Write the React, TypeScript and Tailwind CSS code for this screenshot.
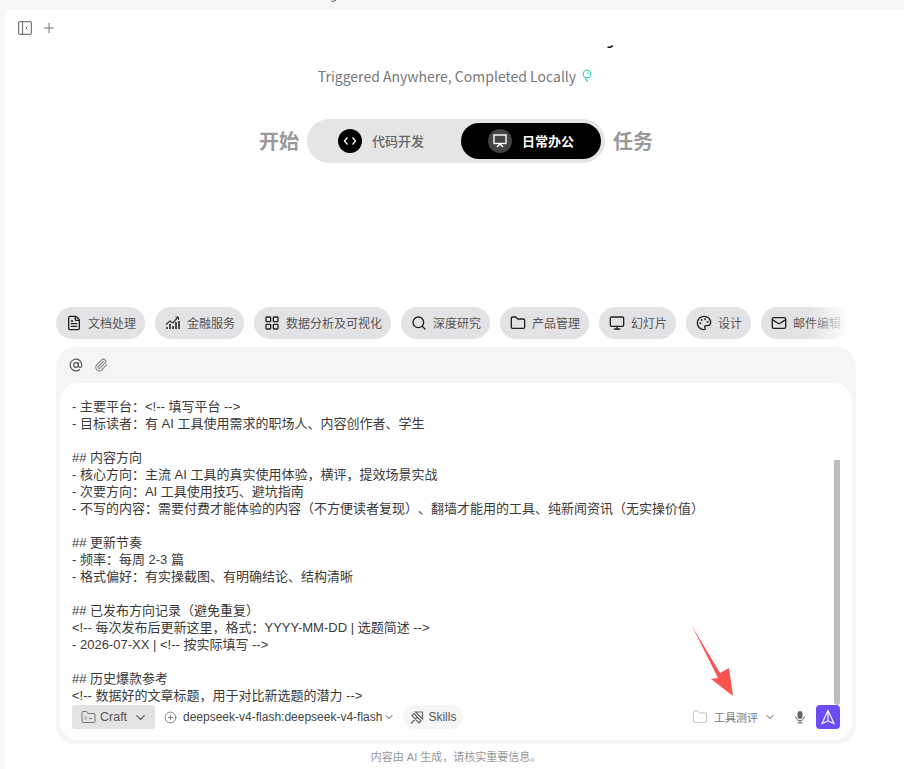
import React from "react";
import { FileText, LayoutGrid, Search, Folder, Monitor, Palette, Mail, AtSign, Paperclip, ChevronDown, Plus, CirclePlus } from "lucide-react";

const sans = "font-['Liberation_Sans','Noto_Sans_CJK_SC',sans-serif]";
const cjk = "font-['Noto_Sans_CJK_SC','Noto_Sans',sans-serif]";

const Chart = () => (
  <svg width="16" height="16" viewBox="0 0 16 16" fill="none" stroke="#333" strokeWidth="1.2">
    <path d="M1 9.5l4-3.5 3 2 5-6" />
    <path d="M10.5 2h3v3" strokeWidth="1" />
    <path d="M2 14v-2M5 14V9M8 14v-3M11 14V7M14 14V6" strokeWidth="1.7" />
  </svg>
);

const chips: [React.ReactNode, string, string][] = [
  [<FileText size={16} color="#222" />, "文档处理", "w-[89px]"],
  [<Chart />, "金融服务", "w-[89px]"],
  [<LayoutGrid size={16} color="#222" />, "数据分析及可视化", "w-[137px]"],
  [<Search size={16} color="#222" />, "深度研究", "w-[89px]"],
  [<Folder size={16} color="#222" />, "产品管理", "w-[89px]"],
  [<Monitor size={16} color="#222" />, "幻灯片", "w-[77px]"],
  [<Palette size={16} color="#222" />, "设计", "w-[65px]"],
  [<Mail size={16} color="#222" />, "邮件编辑", "w-[89px]"],
];

const lines = [
  "- 主要平台：<!-- 填写平台 -->",
  "- 目标读者：有 AI 工具使用需求的职场人、内容创作者、学生",
  "",
  "## 内容方向",
  "- 核心方向：主流 AI 工具的真实使用体验，横评，提效场景实战",
  "- 次要方向：AI 工具使用技巧、避坑指南",
  "- 不写的内容：需要付费才能体验的内容（不方便读者复现）、翻墙才能用的工具、纯新闻资讯（无实操价值）",
  "",
  "## 更新节奏",
  "- 频率：每周 2-3 篇",
  "- 格式偏好：有实操截图、有明确结论、结构清晰",
  "",
  "## 已发布方向记录（避免重复）",
  "<!-- 每次发布后更新这里，格式：YYYY-MM-DD | 选题简述 -->",
  "- 2026-07-XX | <!-- 按实际填写 -->",
  "",
  "## 历史爆款参考",
  "<!-- 数据好的文章标题，用于对比新选题的潜力 -->",
];

export default function App() {
  return (
    <div className={`relative h-[769px] w-[904px] overflow-hidden bg-[#f7f7f7] pl-[6px] pt-[10px] ${sans}`}>
      {/* clipped title fragments */}
      <svg className="absolute left-[331px] top-0" width="6" height="2" viewBox="0 0 6 2"><path d="M0.5 1.2h3L5 0" stroke="#555" fill="none" /></svg>

      <div className="relative flex h-[759px] flex-col bg-white">
        <svg className="absolute left-[601px] top-[35px]" width="7" height="3" viewBox="0 0 7 3"><path d="M0.5 2.2h3L6 0.6" stroke="#111" strokeWidth="1.4" fill="none" /></svg>

        <div className="flex h-[36px] items-center gap-[9px] pb-[1px] pl-[12px]">
          <svg width="14" height="14" viewBox="0 0 14 14" fill="none" stroke="#777" strokeWidth="1.2">
            <rect x="0.6" y="0.6" width="12.8" height="12.8" rx="1.5" />
            <path d="M4.5 0.6v12.8" />
            <path d="M9.5 5.5L8 7l1.5 1.5" strokeWidth="1" />
          </svg>
          <Plus size={16} color="#777" strokeWidth={1.5} />
        </div>

        <div className={`mt-[19px] flex h-[22px] items-center justify-center text-[14px] text-[#777] ${cjk}`}>
          <span>Triggered Anywhere, Completed Locally</span>
          <svg className="ml-[6px]" width="10" height="14" viewBox="0 0 10 14" fill="none" stroke="#2cc9a8" strokeWidth="1.1">
            <circle cx="5" cy="5" r="3.8" />
            <path d="M3 9l3 4M5.5 3.5l1 1" />
          </svg>
        </div>

        <div className={`mt-[32px] flex items-center justify-center pl-[2px] ${cjk}`}>
          <span className="text-[20px] font-bold text-[#999]">开始</span>
          <div className="mx-[8px] flex h-[44px] w-[298px] items-center justify-between rounded-full bg-[#e5e5e5] pl-[31px] pr-[4px]">
            <div className="flex items-center gap-[10px]">
              <span className="flex h-[24px] w-[24px] items-center justify-center rounded-full bg-black">
                <svg width="14" height="12" viewBox="0 0 14 12" fill="none" stroke="#fff" strokeWidth="1.3"><path d="M4.5 2.5L1.5 6l3 3.5M9.5 2.5l3 3.5-3 3.5" /></svg>
              </span>
              <span className="text-[13px] font-medium text-[#666]">代码开发</span>
            </div>
            <div className="flex h-[36px] w-[140px] items-center justify-center gap-[10px] rounded-full bg-black">
              <span className="flex h-[24px] w-[24px] items-center justify-center rounded-full bg-[#444]">
                <svg width="14" height="14" viewBox="0 0 14 14" fill="none" stroke="#fff" strokeWidth="1.4"><rect x="1" y="1" width="12" height="8.5" /><path d="M4 13l3-3 3 3" /></svg>
              </span>
              <span className="text-[13px] font-bold text-white">日常办公</span>
            </div>
          </div>
          <span className="text-[20px] font-bold text-[#999]">任务</span>
        </div>

        <div className="relative ml-[50px] mt-[144px] flex w-[793px] gap-[10px] overflow-hidden">
          {chips.map(([icon, label, w]) => (
            <div key={label} className={`flex h-[32px] ${w} shrink-0 items-center gap-[6px] rounded-full bg-[#e3e3e5] pl-[10px] text-[12px] text-[#555]`}>
              <span className="flex w-[16px] shrink-0 justify-center">{icon}</span>
              <span className={`whitespace-nowrap ${cjk}`}>{label}</span>
            </div>
          ))}
          <div className="absolute right-0 top-0 h-[32px] w-[40px] bg-gradient-to-r from-transparent to-white" />
        </div>

        <div className="ml-[50px] mt-[8px] flex h-[397px] w-[800px] flex-col rounded-[20px] bg-[#f5f5f5] px-[4px] pb-[4px]">
          <div className="flex h-[36px] shrink-0 items-center gap-[11px] pl-[9px]">
            <AtSign size={14} color="#555" />
            <Paperclip size={14} color="#888" />
          </div>
          <div className="relative flex min-h-0 flex-1 flex-col rounded-[18px] bg-white">
            <div className={`h-[322px] overflow-hidden pl-[12px] pt-[15px] text-[13px] leading-[17px] text-[#3a3a3a] [text-spacing-trim:space-all] ${sans}`}>
              {lines.map((l, i) => (
                <div key={i} className="h-[17px] whitespace-pre">{l}</div>
              ))}
            </div>
            <div className="absolute right-[12px] top-[77px] h-[245px] w-[6px] rounded-b-full bg-[#bdbdbd]" />

            <div className="flex items-center justify-between pl-[12px] pr-[12px]">
              <div className="flex items-center">
                <div className="flex h-[24px] w-[83px] items-center gap-[4px] rounded-[3px] bg-[#e3e3e3] pl-[9px] text-[12.5px] text-[#555]">
                  <svg width="15" height="14" viewBox="0 0 15 14" fill="none" stroke="#777" strokeWidth="1"><path d="M1 2.5a1 1 0 011-1h3.5l1.5 2h6a1 1 0 011 1v7a1 1 0 01-1 1H2a1 1 0 01-1-1z" /><path d="M4 6.5l1.5 1.5L4 9.5M8 8.5h3" /></svg>
                  <span>Craft</span>
                  <ChevronDown size={15} color="#555" className="ml-[2px]" />
                </div>
                <div className="ml-[9px] flex items-center text-[12px] text-[#444]">
                  <CirclePlus size={13} color="#555" strokeWidth={1.3} />
                  <span className="ml-[6px]">deepseek-v4-flash:deepseek-v4-flash</span>
                  <ChevronDown size={12} color="#555" className="ml-[1px]" />
                </div>
                <div className="ml-[8px] flex h-[24px] w-[60px] items-center gap-[4px] rounded-full bg-[#f5f5f5] pl-[6px] text-[12px] text-[#555]">
                  <svg width="15" height="15" viewBox="0 0 15 15" fill="none" stroke="#666" strokeWidth="1.2"><path d="M2 13.5L8 7.5M6.5 2h7v7L10.5 6 8 3.5zM3 5.5l2-2 7 7.5-2 2z" /></svg>
                  <span>Skills</span>
                </div>
              </div>
              <div className="relative z-10 flex items-center">
                <Folder size={16} color="#aaa" strokeWidth={1.1} />
                <span className={`ml-[6px] text-[11px] text-[#777] ${cjk}`}>工具测评</span>
                <ChevronDown size={12} color="#555" className="ml-[6px]" />
                <svg className="ml-[17px]" width="14" height="14" viewBox="0 0 14 14"><rect x="4.5" y="1" width="5" height="8" rx="2.5" fill="#666" /><path d="M2.8 6.5a4.2 4.2 0 008.4 0M7 11v2M4.5 13h5" stroke="#666" fill="none" strokeWidth="1" /></svg>
                <span className="ml-[9px] flex h-[24px] w-[24px] items-center justify-center rounded-[4px] bg-[#6b4cf6]">
                  <svg width="16" height="16" viewBox="0 0 16 16" fill="none" stroke="#fff" strokeWidth="1.1"><path d="M8 1.5L14 14.5 8 12 2 14.5z M8 1.5V12" /></svg>
                </span>
              </div>
            </div>
          </div>
        </div>

        <div className={`mt-[5px] flex h-[16px] items-center justify-center pl-[2px] text-[11px] text-[#999] ${sans}`}>内容由 AI 生成，请核实重要信息。</div>

        {/* red annotation arrow */}
        <svg className="absolute left-[684px] top-[614px]" width="48" height="80" viewBox="0 0 48 80">
          <path d="M2 2L30 49L39 44L43 72L21 55L28 54Z" fill="#fb5252" />
        </svg>
      </div>
    </div>
  );
}
